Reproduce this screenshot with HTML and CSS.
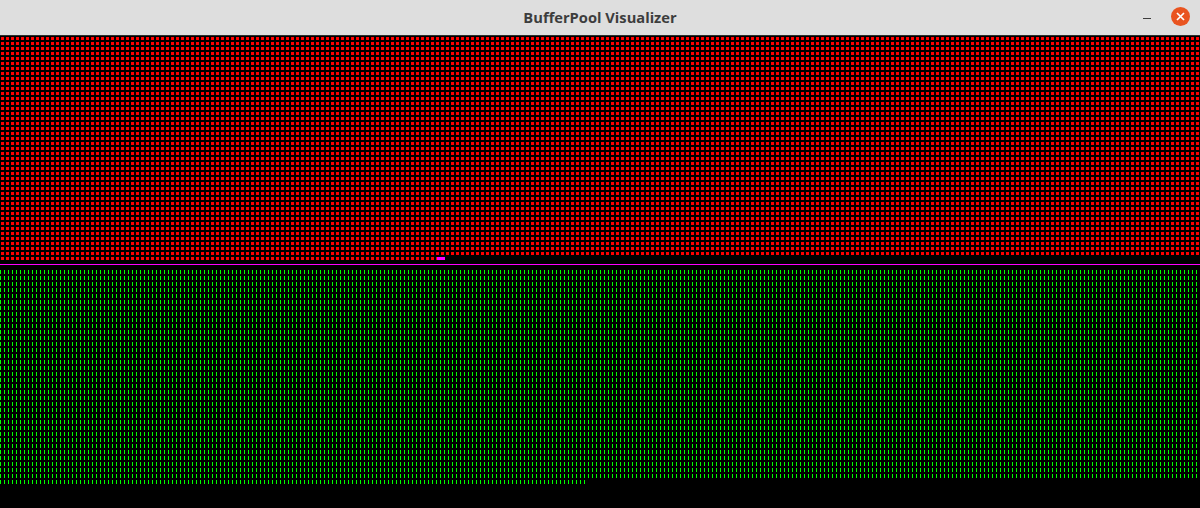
FILE: index.html
```html
<!DOCTYPE html>
<html lang="en">
<head>
<meta charset="utf-8">
<title>BufferPool Visualizer</title>
<link rel="stylesheet" href="styles.css">
</head>
<body>
<div class="window">
  <header class="titlebar">
    <span class="title">BufferPool Visualizer</span>
    <div class="controls">
      <svg class="minimize" width="10" height="10" viewBox="0 0 10 10"><path d="M1 6.5H9" stroke="#3d3d3d" stroke-width="1"/></svg>
      <svg class="close" width="19" height="19" viewBox="0 0 19 19"><circle cx="9.5" cy="9.5" r="9.5" fill="#e95420"/><path d="M6 6L13 13M13 6L6 13" stroke="#fff" stroke-width="1.7"/></svg>
    </div>
  </header>
  <main class="canvas">
    <section class="red-pool">
      <div class="red-full"></div>
      <div class="red-last">
        <div class="red-partial"></div>
        <div class="cursor"></div>
      </div>
    </section>
    <div class="divider"></div>
    <section class="green-pool">
      <div class="green-full"></div>
      <div class="green-partial"></div>
    </section>
  </main>
</div>
</body>
</html>
```

FILE: styles.css
```css
* { box-sizing: border-box; }
html, body { margin: 0; padding: 0; background: #000; }
.window { width: 1200px; height: 508px; display: flex; flex-direction: column; overflow: hidden; }
.titlebar { height: 36px; flex: none; background: #dedede; border-bottom: 1px solid #2f2f2f; display: flex; align-items: center; justify-content: center; position: relative; }
.title { font: 700 14.7px "Open Sans", "Noto Sans", sans-serif; color: #3d3d3d; position: relative; top: -1px; }
.controls { position: absolute; right: 10px; top: 7px; display: flex; align-items: center; gap: 19px; }
.canvas { flex: 1; background: #000; display: flex; flex-direction: column; padding-top: 1px; }
.red-pool { display: flex; flex-direction: column; margin-left: 1px; }
.red-full, .red-partial {
  background-image: linear-gradient(180deg, transparent 3px, #000 3px), linear-gradient(90deg, #f00 3px, #000 3px);
  background-size: 5px 5px;
}
.red-full { height: 220px; }
.red-last { height: 3px; display: flex; }
.red-partial { width: 436px; }
.cursor { width: 8px; background: #f0f; }
.divider { height: 1px; background: #f0f; margin-top: 4px; }
.green-pool { margin-top: 5px; display: flex; flex-direction: column; }
.green-full, .green-partial {
  background-image: linear-gradient(180deg, transparent 4px, #000 4px), linear-gradient(90deg, #0f0 1px, #000 1px);
  background-size: 4px 6px;
}
.green-full { height: 210px; }
.green-partial { height: 4px; width: 587px; }
```
